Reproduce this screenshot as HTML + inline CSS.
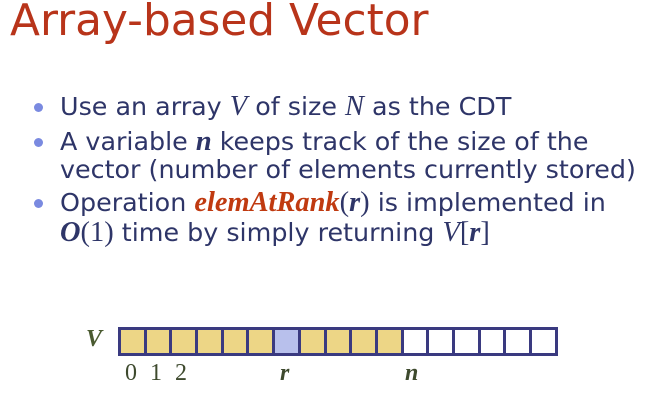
<!DOCTYPE html>
<html><head><meta charset="utf-8"><style>
html,body{margin:0;padding:0;background:#fff;width:672px;height:403px;overflow:hidden;position:relative}
.t{position:absolute;left:10px;top:-5px;font-family:"DejaVu Sans",sans-serif;font-size:44px;color:#B8341A;white-space:nowrap;transform-origin:0 0;transform:scaleX(0.995)}
.l{position:absolute;left:60px;font-family:"DejaVu Sans",sans-serif;font-size:25px;color:#2E3568;white-space:nowrap;transform-origin:0 0;transform:scaleX(1.015)}
.b{position:absolute;left:34px;width:9px;height:9px;border-radius:50%;background:#7A8AE0}
.s{font-family:"Liberation Serif",serif;font-size:28px}
.i{font-style:italic;font-weight:bold}
.red{color:#C03A10}
.cells{position:absolute;left:118px;top:327px;display:flex;border:3px solid #3A3A80;border-right:none}
.c{width:22.7px;height:23px;border-right:3px solid #3A3A80;background:#fff}
.y{background:#EDD686}.p{background:#B8C0EC}
.g{position:absolute;font-family:"Liberation Serif",serif;font-size:24px;color:#3E4A2E}
</style></head><body>
<div class="t">Array-based Vector</div>
<div class="b" style="top:103px"></div>
<div class="b" style="top:138px"></div>
<div class="b" style="top:199px"></div>
<div class="l" style="top:91px">Use an array <span class="s i" style="font-weight:normal">V</span> of size <span class="s" style="font-style:italic">N</span> as the CDT</div>
<div class="l" style="top:126px">A variable <span class="s i">n</span> keeps track of the size of the</div>
<div class="l" style="top:155px">vector (number of elements currently stored)</div>
<div class="l" style="top:187px">Operation <span class="s i red">elemAtRank</span><span class="s">(<b><i>r</i></b>)</span> is implemented in</div>
<div class="l" style="top:217px"><span class="s i">O</span><span class="s">(1)</span> time by simply returning <span class="s"><i>V</i>[<b><i>r</i></b>]</span></div>
<div class="g" style="left:86px;top:326px;font-style:italic;font-weight:bold;color:#4A5A30">V</div>
<div class="cells">
<div class="c y"></div><div class="c y"></div><div class="c y"></div><div class="c y"></div><div class="c y"></div><div class="c y"></div><div class="c p"></div><div class="c y"></div><div class="c y"></div><div class="c y"></div><div class="c y"></div><div class="c"></div><div class="c"></div><div class="c"></div><div class="c"></div><div class="c"></div><div class="c"></div>
</div>
<div class="g" style="left:125px;top:360px">0</div>
<div class="g" style="left:150px;top:360px">1</div>
<div class="g" style="left:175px;top:360px">2</div>
<div class="g" style="left:280px;top:360px;font-style:italic;font-weight:bold">r</div>
<div class="g" style="left:405px;top:360px;font-style:italic;font-weight:bold">n</div>
</body></html>
